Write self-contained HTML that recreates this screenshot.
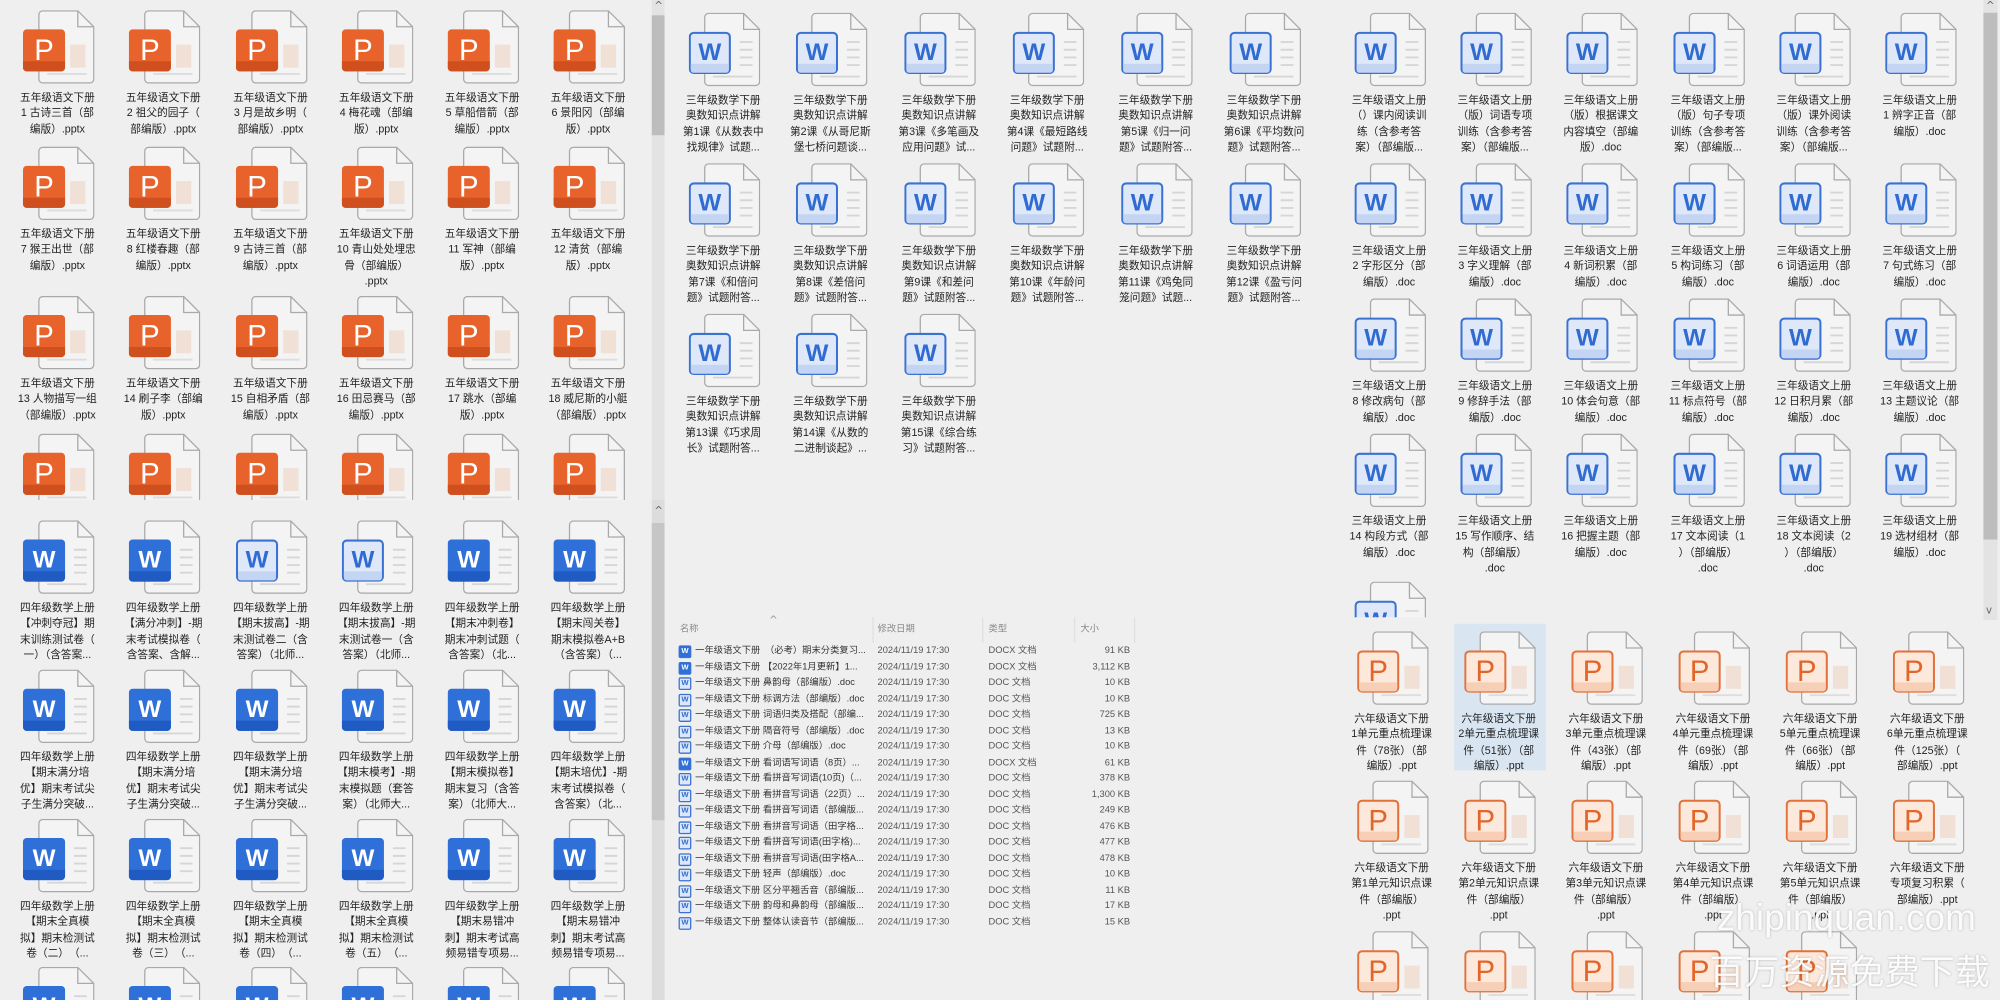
<!DOCTYPE html>
<html><head><meta charset="utf-8">
<style>
html,body{margin:0;padding:0;width:2000px;height:1000px;overflow:hidden;background:#efefef}
#r{position:absolute;left:0;top:0;width:1568px;height:784px;transform:scale(1.27551);transform-origin:0 0;overflow:hidden;background:#efefef;font-family:"Liberation Sans","Noto Sans CJK SC",sans-serif;color:#222}
.i{position:absolute;width:80px;height:120px}
.c{height:26px;overflow:hidden}
.c2{height:54px;overflow:hidden}
.i svg{position:absolute;left:13px;top:0}
.L{position:absolute;left:13px;top:15px;width:33px;height:33px;line-height:33px;text-align:center;font-family:"Liberation Sans",sans-serif;font-weight:normal}
.lp{font-size:23px;color:#fff}
.lpo{font-size:23px;color:#e2652a}
.lw{font-size:19px;color:#fff;font-weight:bold}
.lwo{font-size:19px;color:#2f6bd0;font-weight:bold}
.i p{position:absolute;top:62px;left:-4px;width:88px;margin:0;text-align:center;font-size:8.4px;line-height:12.4px;white-space:nowrap;color:#222}
.sb{position:absolute;background:#e3e3e3}
.th{position:absolute;background:#bdbdbd}
.ar{position:absolute;font-size:8px;color:#666;font-family:"DejaVu Sans",sans-serif}
.li{position:absolute;left:0;width:520px;height:12.5px;font-size:7.3px;line-height:12.5px;color:#333;white-space:nowrap}
.li span{position:absolute}
.li .ic{position:absolute;left:532px;top:2px;width:8px;height:8px;border:1px solid #3a72d4;border-radius:1.5px;background:#dde7f8;font-size:6px;line-height:8px;text-align:center;color:#2f6bd0;font-weight:bold}
.li .ics{background:#2e6fd8;color:#fff}
</style></head><body>
<svg width="0" height="0" style="position:absolute">
<defs>
<symbol id="dw" viewBox="0 0 56 58"><path d="M15.5 .5H43L55.5 13V54a3 3 0 0 1-3 3H15.5a3 3 0 0 1-3-3V3.5a3 3 0 0 1 3-3z" fill="#f4f4f4" stroke="#a9a9a9"/><path d="M43 .5V13h12.5" fill="none" stroke="#a9a9a9"/><path d="M40 23h10M40 29h10M40 35h10M40 41h10M19 50h31" stroke="#d6d6d6" stroke-width="1.5"/></symbol>
<symbol id="dp" viewBox="0 0 56 58"><path d="M15.5 .5H43L55.5 13V54a3 3 0 0 1-3 3H15.5a3 3 0 0 1-3-3V3.5a3 3 0 0 1 3-3z" fill="#f4f4f4" stroke="#a9a9a9"/><path d="M43 .5V13h12.5" fill="none" stroke="#a9a9a9"/><rect x="37" y="27" width="12" height="18" fill="#f0e0d6"/><path d="M19 50h31" stroke="#dddddd" stroke-width="1.5"/></symbol>
<symbol id="ps" viewBox="0 0 56 58"><rect x="0" y="15" width="33" height="33" rx="3" fill="#e8632b"/><path d="M0 40h33v5a3 3 0 0 1-3 3H3a3 3 0 0 1-3-3z" fill="#cf501e"/></symbol>
<symbol id="po" viewBox="0 0 56 58"><rect x=".8" y="15.8" width="31.4" height="31.4" rx="3" fill="#fde9dc" stroke="#e2713a" stroke-width="1.6"/><path d="M1.6 40h29.8v5a2 2 0 0 1-2 2H3.6a2 2 0 0 1-2-2z" fill="#f7cfb6"/></symbol>
<symbol id="ws" viewBox="0 0 56 58"><rect x="0" y="15" width="33" height="33" rx="3" fill="#2e6fd8"/><path d="M0 40h33v5a3 3 0 0 1-3 3H3a3 3 0 0 1-3-3z" fill="#1f5bc3"/></symbol>
<symbol id="wo" viewBox="0 0 56 58"><rect x=".8" y="15.8" width="31.4" height="31.4" rx="3" fill="#dfe8f8" stroke="#3a72d4" stroke-width="1.6"/><path d="M1.6 40h29.8v5a2 2 0 0 1-2 2H3.6a2 2 0 0 1-2-2z" fill="#c3d5f3"/></symbol>
</defs></svg>
<div id="r">

<!-- scrollbars -->
<div class="sb" style="left:511px;top:0;width:10px;height:392px"></div>
<div class="th" style="left:511px;top:12px;width:10px;height:94px"></div>
<div class="ar" style="left:513px;top:0">^</div>
<div class="sb" style="left:511px;top:392px;width:10px;height:392px;background:#dcdcdc"></div>
<div class="th" style="left:511px;top:410px;width:10px;height:233px;background:#c6c6c6"></div>
<div class="ar" style="left:513px;top:396px">^</div>
<div class="sb" style="left:1555px;top:0;width:11px;height:486px"></div>
<div class="th" style="left:1555px;top:10px;width:11px;height:413px"></div>
<div class="ar" style="left:1557px;top:0">^</div>
<div class="ar" style="left:1557px;top:474px">v</div>

<!-- LEFT TOP: PPT -->
<div class="i" style="left:5px;top:8px"><svg width="56" height="58"><use href="#dp"/><use href="#ps"/></svg><b class="L lp">P</b><p>五年级语文下册<br>1 古诗三首（部<br>编版）.pptx</p></div>
<div class="i" style="left:88px;top:8px"><svg width="56" height="58"><use href="#dp"/><use href="#ps"/></svg><b class="L lp">P</b><p>五年级语文下册<br>2 祖父的园子（<br>部编版）.pptx</p></div>
<div class="i" style="left:172px;top:8px"><svg width="56" height="58"><use href="#dp"/><use href="#ps"/></svg><b class="L lp">P</b><p>五年级语文下册<br>3 月是故乡明（<br>部编版）.pptx</p></div>
<div class="i" style="left:255px;top:8px"><svg width="56" height="58"><use href="#dp"/><use href="#ps"/></svg><b class="L lp">P</b><p>五年级语文下册<br>4 梅花魂（部编<br>版）.pptx</p></div>
<div class="i" style="left:338px;top:8px"><svg width="56" height="58"><use href="#dp"/><use href="#ps"/></svg><b class="L lp">P</b><p>五年级语文下册<br>5 草船借箭（部<br>编版）.pptx</p></div>
<div class="i" style="left:421px;top:8px"><svg width="56" height="58"><use href="#dp"/><use href="#ps"/></svg><b class="L lp">P</b><p>五年级语文下册<br>6 景阳冈（部编<br>版）.pptx</p></div>

<div class="i" style="left:5px;top:115px"><svg width="56" height="58"><use href="#dp"/><use href="#ps"/></svg><b class="L lp">P</b><p>五年级语文下册<br>7 猴王出世（部<br>编版）.pptx</p></div>
<div class="i" style="left:88px;top:115px"><svg width="56" height="58"><use href="#dp"/><use href="#ps"/></svg><b class="L lp">P</b><p>五年级语文下册<br>8 红楼春趣（部<br>编版）.pptx</p></div>
<div class="i" style="left:172px;top:115px"><svg width="56" height="58"><use href="#dp"/><use href="#ps"/></svg><b class="L lp">P</b><p>五年级语文下册<br>9 古诗三首（部<br>编版）.pptx</p></div>
<div class="i" style="left:255px;top:115px"><svg width="56" height="58"><use href="#dp"/><use href="#ps"/></svg><b class="L lp">P</b><p>五年级语文下册<br>10 青山处处埋忠<br>骨（部编版）<br>.pptx</p></div>
<div class="i" style="left:338px;top:115px"><svg width="56" height="58"><use href="#dp"/><use href="#ps"/></svg><b class="L lp">P</b><p>五年级语文下册<br>11 军神（部编<br>版）.pptx</p></div>
<div class="i" style="left:421px;top:115px"><svg width="56" height="58"><use href="#dp"/><use href="#ps"/></svg><b class="L lp">P</b><p>五年级语文下册<br>12 清贫（部编<br>版）.pptx</p></div>

<div class="i" style="left:5px;top:232px"><svg width="56" height="58"><use href="#dp"/><use href="#ps"/></svg><b class="L lp">P</b><p>五年级语文下册<br>13 人物描写一组<br>（部编版）.pptx</p></div>
<div class="i" style="left:88px;top:232px"><svg width="56" height="58"><use href="#dp"/><use href="#ps"/></svg><b class="L lp">P</b><p>五年级语文下册<br>14 刷子李（部编<br>版）.pptx</p></div>
<div class="i" style="left:172px;top:232px"><svg width="56" height="58"><use href="#dp"/><use href="#ps"/></svg><b class="L lp">P</b><p>五年级语文下册<br>15 自相矛盾（部<br>编版）.pptx</p></div>
<div class="i" style="left:255px;top:232px"><svg width="56" height="58"><use href="#dp"/><use href="#ps"/></svg><b class="L lp">P</b><p>五年级语文下册<br>16 田忌赛马（部<br>编版）.pptx</p></div>
<div class="i" style="left:338px;top:232px"><svg width="56" height="58"><use href="#dp"/><use href="#ps"/></svg><b class="L lp">P</b><p>五年级语文下册<br>17 跳水（部编<br>版）.pptx</p></div>
<div class="i" style="left:421px;top:232px"><svg width="56" height="58"><use href="#dp"/><use href="#ps"/></svg><b class="L lp">P</b><p>五年级语文下册<br>18 威尼斯的小艇<br>（部编版）.pptx</p></div>

<div class="i" style="left:5px;top:340px;height:52px;overflow:hidden"><svg width="56" height="58"><use href="#dp"/><use href="#ps"/></svg><b class="L lp">P</b></div>
<div class="i" style="left:88px;top:340px;height:52px;overflow:hidden"><svg width="56" height="58"><use href="#dp"/><use href="#ps"/></svg><b class="L lp">P</b></div>
<div class="i" style="left:172px;top:340px;height:52px;overflow:hidden"><svg width="56" height="58"><use href="#dp"/><use href="#ps"/></svg><b class="L lp">P</b></div>
<div class="i" style="left:255px;top:340px;height:52px;overflow:hidden"><svg width="56" height="58"><use href="#dp"/><use href="#ps"/></svg><b class="L lp">P</b></div>
<div class="i" style="left:338px;top:340px;height:52px;overflow:hidden"><svg width="56" height="58"><use href="#dp"/><use href="#ps"/></svg><b class="L lp">P</b></div>
<div class="i" style="left:421px;top:340px;height:52px;overflow:hidden"><svg width="56" height="58"><use href="#dp"/><use href="#ps"/></svg><b class="L lp">P</b></div>

<!-- LEFT BOTTOM: WORD -->
<div class="i" style="left:5px;top:408px"><svg width="56" height="58"><use href="#dw"/><use href="#ws"/></svg><b class="L lw">W</b><p>四年级数学上册<br>【冲刺夺冠】期<br>末训练测试卷（<br>一）（含答案...</p></div>
<div class="i" style="left:88px;top:408px"><svg width="56" height="58"><use href="#dw"/><use href="#ws"/></svg><b class="L lw">W</b><p>四年级数学上册<br>【满分冲刺】-期<br>末考试模拟卷（<br>含答案、含解...</p></div>
<div class="i" style="left:172px;top:408px"><svg width="56" height="58"><use href="#dw"/><use href="#wo"/></svg><b class="L lwo">W</b><p>四年级数学上册<br>【期末拔高】-期<br>末测试卷二（含<br>答案）（北师...</p></div>
<div class="i" style="left:255px;top:408px"><svg width="56" height="58"><use href="#dw"/><use href="#wo"/></svg><b class="L lwo">W</b><p>四年级数学上册<br>【期末拔高】-期<br>末测试卷一（含<br>答案）（北师...</p></div>
<div class="i" style="left:338px;top:408px"><svg width="56" height="58"><use href="#dw"/><use href="#ws"/></svg><b class="L lw">W</b><p>四年级数学上册<br>【期末冲刺卷】<br>期末冲刺试题（<br>含答案）（北...</p></div>
<div class="i" style="left:421px;top:408px"><svg width="56" height="58"><use href="#dw"/><use href="#ws"/></svg><b class="L lw">W</b><p>四年级数学上册<br>【期末闯关卷】<br>期末模拟卷A+B<br>（含答案）（...</p></div>

<div class="i" style="left:5px;top:525px"><svg width="56" height="58"><use href="#dw"/><use href="#ws"/></svg><b class="L lw">W</b><p>四年级数学上册<br>【期末满分培<br>优】期末考试尖<br>子生满分突破...</p></div>
<div class="i" style="left:88px;top:525px"><svg width="56" height="58"><use href="#dw"/><use href="#ws"/></svg><b class="L lw">W</b><p>四年级数学上册<br>【期末满分培<br>优】期末考试尖<br>子生满分突破...</p></div>
<div class="i" style="left:172px;top:525px"><svg width="56" height="58"><use href="#dw"/><use href="#ws"/></svg><b class="L lw">W</b><p>四年级数学上册<br>【期末满分培<br>优】期末考试尖<br>子生满分突破...</p></div>
<div class="i" style="left:255px;top:525px"><svg width="56" height="58"><use href="#dw"/><use href="#ws"/></svg><b class="L lw">W</b><p>四年级数学上册<br>【期末模考】-期<br>末模拟题（套答<br>案）（北师大...</p></div>
<div class="i" style="left:338px;top:525px"><svg width="56" height="58"><use href="#dw"/><use href="#ws"/></svg><b class="L lw">W</b><p>四年级数学上册<br>【期末模拟卷】<br>期末复习（含答<br>案）（北师大...</p></div>
<div class="i" style="left:421px;top:525px"><svg width="56" height="58"><use href="#dw"/><use href="#ws"/></svg><b class="L lw">W</b><p>四年级数学上册<br>【期末培优】-期<br>末考试模拟卷（<br>含答案）（北...</p></div>

<div class="i" style="left:5px;top:642px"><svg width="56" height="58"><use href="#dw"/><use href="#ws"/></svg><b class="L lw">W</b><p>四年级数学上册<br>【期末全真模<br>拟】期末检测试<br>卷（二）　（...</p></div>
<div class="i" style="left:88px;top:642px"><svg width="56" height="58"><use href="#dw"/><use href="#ws"/></svg><b class="L lw">W</b><p>四年级数学上册<br>【期末全真模<br>拟】期末检测试<br>卷（三）　（...</p></div>
<div class="i" style="left:172px;top:642px"><svg width="56" height="58"><use href="#dw"/><use href="#ws"/></svg><b class="L lw">W</b><p>四年级数学上册<br>【期末全真模<br>拟】期末检测试<br>卷（四）　（...</p></div>
<div class="i" style="left:255px;top:642px"><svg width="56" height="58"><use href="#dw"/><use href="#ws"/></svg><b class="L lw">W</b><p>四年级数学上册<br>【期末全真模<br>拟】期末检测试<br>卷（五）　（...</p></div>
<div class="i" style="left:338px;top:642px"><svg width="56" height="58"><use href="#dw"/><use href="#ws"/></svg><b class="L lw">W</b><p>四年级数学上册<br>【期末易错冲<br>刺】期末考试高<br>频易错专项易...</p></div>
<div class="i" style="left:421px;top:642px"><svg width="56" height="58"><use href="#dw"/><use href="#ws"/></svg><b class="L lw">W</b><p>四年级数学上册<br>【期末易错冲<br>刺】期末考试高<br>频易错专项易...</p></div>

<div class="i c" style="left:5px;top:758px"><svg width="56" height="58"><use href="#dw"/><use href="#ws"/></svg><b class="L lw">W</b></div>
<div class="i c" style="left:88px;top:758px"><svg width="56" height="58"><use href="#dw"/><use href="#ws"/></svg><b class="L lw">W</b></div>
<div class="i c" style="left:172px;top:758px"><svg width="56" height="58"><use href="#dw"/><use href="#ws"/></svg><b class="L lw">W</b></div>
<div class="i c" style="left:255px;top:758px"><svg width="56" height="58"><use href="#dw"/><use href="#ws"/></svg><b class="L lw">W</b></div>
<div class="i c" style="left:338px;top:758px"><svg width="56" height="58"><use href="#dw"/><use href="#ws"/></svg><b class="L lw">W</b></div>
<div class="i c" style="left:421px;top:758px"><svg width="56" height="58"><use href="#dw"/><use href="#ws"/></svg><b class="L lw">W</b></div>

<!-- MIDDLE TOP -->
<div class="i" style="left:527px;top:10px"><svg width="56" height="58"><use href="#dw"/><use href="#wo"/></svg><b class="L lwo">W</b><p>三年级数学下册<br>奥数知识点讲解<br>第1课《从数表中<br>找规律》试题...</p></div>
<div class="i" style="left:611px;top:10px"><svg width="56" height="58"><use href="#dw"/><use href="#wo"/></svg><b class="L lwo">W</b><p>三年级数学下册<br>奥数知识点讲解<br>第2课《从哥尼斯<br>堡七桥问题谈...</p></div>
<div class="i" style="left:696px;top:10px"><svg width="56" height="58"><use href="#dw"/><use href="#wo"/></svg><b class="L lwo">W</b><p>三年级数学下册<br>奥数知识点讲解<br>第3课《多笔画及<br>应用问题》试...</p></div>
<div class="i" style="left:781px;top:10px"><svg width="56" height="58"><use href="#dw"/><use href="#wo"/></svg><b class="L lwo">W</b><p>三年级数学下册<br>奥数知识点讲解<br>第4课《最短路线<br>问题》试题附...</p></div>
<div class="i" style="left:866px;top:10px"><svg width="56" height="58"><use href="#dw"/><use href="#wo"/></svg><b class="L lwo">W</b><p>三年级数学下册<br>奥数知识点讲解<br>第5课《归一问<br>题》试题附答...</p></div>
<div class="i" style="left:951px;top:10px"><svg width="56" height="58"><use href="#dw"/><use href="#wo"/></svg><b class="L lwo">W</b><p>三年级数学下册<br>奥数知识点讲解<br>第6课《平均数问<br>题》试题附答...</p></div>

<div class="i" style="left:527px;top:128px"><svg width="56" height="58"><use href="#dw"/><use href="#wo"/></svg><b class="L lwo">W</b><p>三年级数学下册<br>奥数知识点讲解<br>第7课《和倍问<br>题》试题附答...</p></div>
<div class="i" style="left:611px;top:128px"><svg width="56" height="58"><use href="#dw"/><use href="#wo"/></svg><b class="L lwo">W</b><p>三年级数学下册<br>奥数知识点讲解<br>第8课《差倍问<br>题》试题附答...</p></div>
<div class="i" style="left:696px;top:128px"><svg width="56" height="58"><use href="#dw"/><use href="#wo"/></svg><b class="L lwo">W</b><p>三年级数学下册<br>奥数知识点讲解<br>第9课《和差问<br>题》试题附答...</p></div>
<div class="i" style="left:781px;top:128px"><svg width="56" height="58"><use href="#dw"/><use href="#wo"/></svg><b class="L lwo">W</b><p>三年级数学下册<br>奥数知识点讲解<br>第10课《年龄问<br>题》试题附答...</p></div>
<div class="i" style="left:866px;top:128px"><svg width="56" height="58"><use href="#dw"/><use href="#wo"/></svg><b class="L lwo">W</b><p>三年级数学下册<br>奥数知识点讲解<br>第11课《鸡兔同<br>笼问题》试题...</p></div>
<div class="i" style="left:951px;top:128px"><svg width="56" height="58"><use href="#dw"/><use href="#wo"/></svg><b class="L lwo">W</b><p>三年级数学下册<br>奥数知识点讲解<br>第12课《盈亏问<br>题》试题附答...</p></div>

<div class="i" style="left:527px;top:246px"><svg width="56" height="58"><use href="#dw"/><use href="#wo"/></svg><b class="L lwo">W</b><p>三年级数学下册<br>奥数知识点讲解<br>第13课《巧求周<br>长》试题附答...</p></div>
<div class="i" style="left:611px;top:246px"><svg width="56" height="58"><use href="#dw"/><use href="#wo"/></svg><b class="L lwo">W</b><p>三年级数学下册<br>奥数知识点讲解<br>第14课《从数的<br>二进制谈起》...</p></div>
<div class="i" style="left:696px;top:246px"><svg width="56" height="58"><use href="#dw"/><use href="#wo"/></svg><b class="L lwo">W</b><p>三年级数学下册<br>奥数知识点讲解<br>第15课《综合练<br>习》试题附答...</p></div>

<!-- MIDDLE LIST -->
<div class="ar" style="left:603px;top:482px;color:#999">^</div>
<div class="li" style="top:487px;color:#8a8a8a"><span style="left:533px">名称</span><span style="left:688px">修改日期</span><span style="left:775px">类型</span><span style="left:847px">大小</span></div>
<div style="position:absolute;left:684px;top:484px;width:1px;height:20px;background:#e0e0e0"></div>
<div style="position:absolute;left:770px;top:484px;width:1px;height:20px;background:#e0e0e0"></div>
<div style="position:absolute;left:842px;top:484px;width:1px;height:20px;background:#e0e0e0"></div>
<div style="position:absolute;left:889px;top:484px;width:1px;height:20px;background:#e0e0e0"></div>

<div class="li" style="top:504px"><b class="ic ics">W</b><span style="left:545px">一年级语文下册　（必考）期末分类复习...</span><span style="left:688px;color:#555">2024/11/19 17:30</span><span style="left:775px;color:#555">DOCX 文档</span><span style="right:-366px;color:#555">91 KB</span></div>
<div class="li" style="top:516.5px"><b class="ic ics">W</b><span style="left:545px">一年级语文下册 【2022年1月更新】1...</span><span style="left:688px;color:#555">2024/11/19 17:30</span><span style="left:775px;color:#555">DOCX 文档</span><span style="right:-366px;color:#555">3,112 KB</span></div>
<div class="li" style="top:529px"><b class="ic">W</b><span style="left:545px">一年级语文下册 鼻韵母（部编版）.doc</span><span style="left:688px;color:#555">2024/11/19 17:30</span><span style="left:775px;color:#555">DOC 文档</span><span style="right:-366px;color:#555">10 KB</span></div>
<div class="li" style="top:541.5px"><b class="ic">W</b><span style="left:545px">一年级语文下册 标调方法（部编版）.doc</span><span style="left:688px;color:#555">2024/11/19 17:30</span><span style="left:775px;color:#555">DOC 文档</span><span style="right:-366px;color:#555">10 KB</span></div>
<div class="li" style="top:554px"><b class="ic">W</b><span style="left:545px">一年级语文下册 词语归类及搭配（部编...</span><span style="left:688px;color:#555">2024/11/19 17:30</span><span style="left:775px;color:#555">DOC 文档</span><span style="right:-366px;color:#555">725 KB</span></div>
<div class="li" style="top:566.5px"><b class="ic">W</b><span style="left:545px">一年级语文下册 隔音符号（部编版）.doc</span><span style="left:688px;color:#555">2024/11/19 17:30</span><span style="left:775px;color:#555">DOC 文档</span><span style="right:-366px;color:#555">13 KB</span></div>
<div class="li" style="top:579px"><b class="ic">W</b><span style="left:545px">一年级语文下册 介母（部编版）.doc</span><span style="left:688px;color:#555">2024/11/19 17:30</span><span style="left:775px;color:#555">DOC 文档</span><span style="right:-366px;color:#555">10 KB</span></div>
<div class="li" style="top:591.5px"><b class="ic ics">W</b><span style="left:545px">一年级语文下册 看词语写词语（8页）...</span><span style="left:688px;color:#555">2024/11/19 17:30</span><span style="left:775px;color:#555">DOCX 文档</span><span style="right:-366px;color:#555">61 KB</span></div>
<div class="li" style="top:604px"><b class="ic">W</b><span style="left:545px">一年级语文下册 看拼音写词语(10页)（...</span><span style="left:688px;color:#555">2024/11/19 17:30</span><span style="left:775px;color:#555">DOC 文档</span><span style="right:-366px;color:#555">378 KB</span></div>
<div class="li" style="top:616.5px"><b class="ic">W</b><span style="left:545px">一年级语文下册 看拼音写词语（22页）...</span><span style="left:688px;color:#555">2024/11/19 17:30</span><span style="left:775px;color:#555">DOC 文档</span><span style="right:-366px;color:#555">1,300 KB</span></div>
<div class="li" style="top:629px"><b class="ic">W</b><span style="left:545px">一年级语文下册 看拼音写词语（部编版...</span><span style="left:688px;color:#555">2024/11/19 17:30</span><span style="left:775px;color:#555">DOC 文档</span><span style="right:-366px;color:#555">249 KB</span></div>
<div class="li" style="top:641.5px"><b class="ic">W</b><span style="left:545px">一年级语文下册 看拼音写词语（田字格...</span><span style="left:688px;color:#555">2024/11/19 17:30</span><span style="left:775px;color:#555">DOC 文档</span><span style="right:-366px;color:#555">476 KB</span></div>
<div class="li" style="top:654px"><b class="ic">W</b><span style="left:545px">一年级语文下册 看拼音写词语(田字格)...</span><span style="left:688px;color:#555">2024/11/19 17:30</span><span style="left:775px;color:#555">DOC 文档</span><span style="right:-366px;color:#555">477 KB</span></div>
<div class="li" style="top:666.5px"><b class="ic">W</b><span style="left:545px">一年级语文下册 看拼音写词语(田字格A...</span><span style="left:688px;color:#555">2024/11/19 17:30</span><span style="left:775px;color:#555">DOC 文档</span><span style="right:-366px;color:#555">478 KB</span></div>
<div class="li" style="top:679px"><b class="ic">W</b><span style="left:545px">一年级语文下册 轻声（部编版）.doc</span><span style="left:688px;color:#555">2024/11/19 17:30</span><span style="left:775px;color:#555">DOC 文档</span><span style="right:-366px;color:#555">10 KB</span></div>
<div class="li" style="top:691.5px"><b class="ic">W</b><span style="left:545px">一年级语文下册 区分平翘舌音（部编版...</span><span style="left:688px;color:#555">2024/11/19 17:30</span><span style="left:775px;color:#555">DOC 文档</span><span style="right:-366px;color:#555">11 KB</span></div>
<div class="li" style="top:704px"><b class="ic">W</b><span style="left:545px">一年级语文下册 韵母和鼻韵母（部编版...</span><span style="left:688px;color:#555">2024/11/19 17:30</span><span style="left:775px;color:#555">DOC 文档</span><span style="right:-366px;color:#555">17 KB</span></div>
<div class="li" style="top:716.5px"><b class="ic">W</b><span style="left:545px">一年级语文下册 整体认读音节（部编版...</span><span style="left:688px;color:#555">2024/11/19 17:30</span><span style="left:775px;color:#555">DOC 文档</span><span style="right:-366px;color:#555">15 KB</span></div>

<!-- RIGHT TOP -->
<div style="position:absolute;left:0;top:0;width:1555px;height:484px;overflow:hidden">
<div class="i" style="left:1049px;top:10px"><svg width="56" height="58"><use href="#dw"/><use href="#wo"/></svg><b class="L lwo">W</b><p>三年级语文上册<br>（）课内阅读训<br>练（含参考答<br>案）（部编版...</p></div>
<div class="i" style="left:1132px;top:10px"><svg width="56" height="58"><use href="#dw"/><use href="#wo"/></svg><b class="L lwo">W</b><p>三年级语文上册<br>（版）词语专项<br>训练（含参考答<br>案）（部编版...</p></div>
<div class="i" style="left:1215px;top:10px"><svg width="56" height="58"><use href="#dw"/><use href="#wo"/></svg><b class="L lwo">W</b><p>三年级语文上册<br>（版）根据课文<br>内容填空（部编<br>版）.doc</p></div>
<div class="i" style="left:1299px;top:10px"><svg width="56" height="58"><use href="#dw"/><use href="#wo"/></svg><b class="L lwo">W</b><p>三年级语文上册<br>（版）句子专项<br>训练（含参考答<br>案）（部编版...</p></div>
<div class="i" style="left:1382px;top:10px"><svg width="56" height="58"><use href="#dw"/><use href="#wo"/></svg><b class="L lwo">W</b><p>三年级语文上册<br>（版）课外阅读<br>训练（含参考答<br>案）（部编版...</p></div>
<div class="i" style="left:1465px;top:10px"><svg width="56" height="58"><use href="#dw"/><use href="#wo"/></svg><b class="L lwo">W</b><p>三年级语文上册<br>1 辨字正音（部<br>编版）.doc</p></div>

<div class="i" style="left:1049px;top:128px"><svg width="56" height="58"><use href="#dw"/><use href="#wo"/></svg><b class="L lwo">W</b><p>三年级语文上册<br>2 字形区分（部<br>编版）.doc</p></div>
<div class="i" style="left:1132px;top:128px"><svg width="56" height="58"><use href="#dw"/><use href="#wo"/></svg><b class="L lwo">W</b><p>三年级语文上册<br>3 字义理解（部<br>编版）.doc</p></div>
<div class="i" style="left:1215px;top:128px"><svg width="56" height="58"><use href="#dw"/><use href="#wo"/></svg><b class="L lwo">W</b><p>三年级语文上册<br>4 新词积累（部<br>编版）.doc</p></div>
<div class="i" style="left:1299px;top:128px"><svg width="56" height="58"><use href="#dw"/><use href="#wo"/></svg><b class="L lwo">W</b><p>三年级语文上册<br>5 构词练习（部<br>编版）.doc</p></div>
<div class="i" style="left:1382px;top:128px"><svg width="56" height="58"><use href="#dw"/><use href="#wo"/></svg><b class="L lwo">W</b><p>三年级语文上册<br>6 词语运用（部<br>编版）.doc</p></div>
<div class="i" style="left:1465px;top:128px"><svg width="56" height="58"><use href="#dw"/><use href="#wo"/></svg><b class="L lwo">W</b><p>三年级语文上册<br>7 句式练习（部<br>编版）.doc</p></div>

<div class="i" style="left:1049px;top:234px"><svg width="56" height="58"><use href="#dw"/><use href="#wo"/></svg><b class="L lwo">W</b><p>三年级语文上册<br>8 修改病句（部<br>编版）.doc</p></div>
<div class="i" style="left:1132px;top:234px"><svg width="56" height="58"><use href="#dw"/><use href="#wo"/></svg><b class="L lwo">W</b><p>三年级语文上册<br>9 修辞手法（部<br>编版）.doc</p></div>
<div class="i" style="left:1215px;top:234px"><svg width="56" height="58"><use href="#dw"/><use href="#wo"/></svg><b class="L lwo">W</b><p>三年级语文上册<br>10 体会句意（部<br>编版）.doc</p></div>
<div class="i" style="left:1299px;top:234px"><svg width="56" height="58"><use href="#dw"/><use href="#wo"/></svg><b class="L lwo">W</b><p>三年级语文上册<br>11 标点符号（部<br>编版）.doc</p></div>
<div class="i" style="left:1382px;top:234px"><svg width="56" height="58"><use href="#dw"/><use href="#wo"/></svg><b class="L lwo">W</b><p>三年级语文上册<br>12 日积月累（部<br>编版）.doc</p></div>
<div class="i" style="left:1465px;top:234px"><svg width="56" height="58"><use href="#dw"/><use href="#wo"/></svg><b class="L lwo">W</b><p>三年级语文上册<br>13 主题议论（部<br>编版）.doc</p></div>

<div class="i" style="left:1049px;top:340px"><svg width="56" height="58"><use href="#dw"/><use href="#wo"/></svg><b class="L lwo">W</b><p>三年级语文上册<br>14 构段方式（部<br>编版）.doc</p></div>
<div class="i" style="left:1132px;top:340px"><svg width="56" height="58"><use href="#dw"/><use href="#wo"/></svg><b class="L lwo">W</b><p>三年级语文上册<br>15 写作顺序、结<br>构（部编版）<br>.doc</p></div>
<div class="i" style="left:1215px;top:340px"><svg width="56" height="58"><use href="#dw"/><use href="#wo"/></svg><b class="L lwo">W</b><p>三年级语文上册<br>16 把握主题（部<br>编版）.doc</p></div>
<div class="i" style="left:1299px;top:340px"><svg width="56" height="58"><use href="#dw"/><use href="#wo"/></svg><b class="L lwo">W</b><p>三年级语文上册<br>17 文本阅读（1<br>）（部编版）<br>.doc</p></div>
<div class="i" style="left:1382px;top:340px"><svg width="56" height="58"><use href="#dw"/><use href="#wo"/></svg><b class="L lwo">W</b><p>三年级语文上册<br>18 文本阅读（2<br>）（部编版）<br>.doc</p></div>
<div class="i" style="left:1465px;top:340px"><svg width="56" height="58"><use href="#dw"/><use href="#wo"/></svg><b class="L lwo">W</b><p>三年级语文上册<br>19 选材组材（部<br>编版）.doc</p></div>

<div class="i" style="left:1049px;top:456px;height:28px;overflow:hidden"><svg width="56" height="58"><use href="#dw"/><use href="#wo"/></svg><b class="L lwo">W</b></div>
</div>

<!-- RIGHT BOTTOM -->
<div style="position:absolute;left:1140px;top:489px;width:72px;height:115px;background:#d9e6f2"></div>
<div class="i" style="left:1051px;top:495px"><svg width="56" height="58"><use href="#dp"/><use href="#po"/></svg><b class="L lpo">P</b><p>六年级语文下册<br>1单元重点梳理课<br>件（78张）（部<br>编版）.ppt</p></div>
<div class="i" style="left:1135px;top:495px"><svg width="56" height="58"><use href="#dp"/><use href="#po"/></svg><b class="L lpo">P</b><p>六年级语文下册<br>2单元重点梳理课<br>件（51张）（部<br>编版）.ppt</p></div>
<div class="i" style="left:1219px;top:495px"><svg width="56" height="58"><use href="#dp"/><use href="#po"/></svg><b class="L lpo">P</b><p>六年级语文下册<br>3单元重点梳理课<br>件（43张）（部<br>编版）.ppt</p></div>
<div class="i" style="left:1303px;top:495px"><svg width="56" height="58"><use href="#dp"/><use href="#po"/></svg><b class="L lpo">P</b><p>六年级语文下册<br>4单元重点梳理课<br>件（69张）（部<br>编版）.ppt</p></div>
<div class="i" style="left:1387px;top:495px"><svg width="56" height="58"><use href="#dp"/><use href="#po"/></svg><b class="L lpo">P</b><p>六年级语文下册<br>5单元重点梳理课<br>件（66张）（部<br>编版）.ppt</p></div>
<div class="i" style="left:1471px;top:495px"><svg width="56" height="58"><use href="#dp"/><use href="#po"/></svg><b class="L lpo">P</b><p>六年级语文下册<br>6单元重点梳理课<br>件（125张）（<br>部编版）.ppt</p></div>

<div class="i" style="left:1051px;top:612px"><svg width="56" height="58"><use href="#dp"/><use href="#po"/></svg><b class="L lpo">P</b><p>六年级语文下册<br>第1单元知识点课<br>件（部编版）<br>.ppt</p></div>
<div class="i" style="left:1135px;top:612px"><svg width="56" height="58"><use href="#dp"/><use href="#po"/></svg><b class="L lpo">P</b><p>六年级语文下册<br>第2单元知识点课<br>件（部编版）<br>.ppt</p></div>
<div class="i" style="left:1219px;top:612px"><svg width="56" height="58"><use href="#dp"/><use href="#po"/></svg><b class="L lpo">P</b><p>六年级语文下册<br>第3单元知识点课<br>件（部编版）<br>.ppt</p></div>
<div class="i" style="left:1303px;top:612px"><svg width="56" height="58"><use href="#dp"/><use href="#po"/></svg><b class="L lpo">P</b><p>六年级语文下册<br>第4单元知识点课<br>件（部编版）<br>.ppt</p></div>
<div class="i" style="left:1387px;top:612px"><svg width="56" height="58"><use href="#dp"/><use href="#po"/></svg><b class="L lpo">P</b><p>六年级语文下册<br>第5单元知识点课<br>件（部编版）<br>.ppt</p></div>
<div class="i" style="left:1471px;top:612px"><svg width="56" height="58"><use href="#dp"/><use href="#po"/></svg><b class="L lpo">P</b><p>六年级语文下册<br>专项复习积累（<br>部编版）.ppt</p></div>

<div class="i c2" style="left:1051px;top:730px"><svg width="56" height="58"><use href="#dp"/><use href="#po"/></svg><b class="L lpo">P</b></div>
<div class="i c2" style="left:1135px;top:730px"><svg width="56" height="58"><use href="#dp"/><use href="#po"/></svg><b class="L lpo">P</b></div>
<div class="i c2" style="left:1219px;top:730px"><svg width="56" height="58"><use href="#dp"/><use href="#po"/></svg><b class="L lpo">P</b></div>
<div class="i c2" style="left:1303px;top:730px"><svg width="56" height="58"><use href="#dp"/><use href="#po"/></svg><b class="L lpo">P</b></div>
<div class="i c2" style="left:1387px;top:730px"><svg width="56" height="58"><use href="#dp"/><use href="#po"/></svg><b class="L lpo">P</b></div>

<!-- watermark -->
<div style="position:absolute;left:1346px;top:702px;font-size:29px;line-height:36px;color:rgba(255,255,255,0.93);text-shadow:0 0 2px rgba(0,0,0,0.25);font-family:'Liberation Sans',sans-serif;white-space:nowrap">zhipinquan.com</div>
<div style="position:absolute;left:1340px;top:744px;font-size:27.5px;line-height:38px;height:40px;color:rgba(255,255,255,0.93);text-shadow:0 0 2px rgba(0,0,0,0.25);font-family:'Liberation Sans','Noto Sans CJK SC',sans-serif;white-space:nowrap">百万资源免费下载</div>

</div>
</body></html>
